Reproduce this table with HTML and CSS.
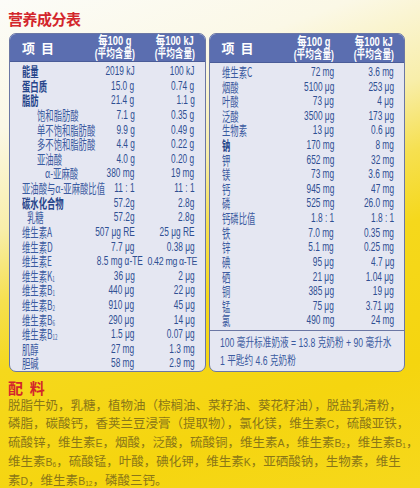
FILE: index.html
```html
<!DOCTYPE html>
<html lang="zh-CN">
<head>
<meta charset="utf-8">
<title>营养成分表</title>
<link rel="stylesheet" href="styles.css">
</head>
<body>
<main class="page">
  <h1 class="title">营养成分表</h1>
  <div class="panels">
    <section class="panel">
      <div class="head">
        <span class="h-item">项&nbsp;&nbsp;目</span>
        <span class="h-col"><span class="c">每100 g<br><small>(平均含量)</small></span></span>
        <span class="h-col"><span class="c">每100 kJ<br><small>(平均含量)</small></span></span>
      </div>
      <div class="rows">
        <div class="row"><span class="nm b"><span class="c">能量</span></span><span class="v"><span class="c">2019 kJ</span></span><span class="v"><span class="c">100 kJ</span></span></div>
        <div class="row"><span class="nm b"><span class="c">蛋白质</span></span><span class="v"><span class="c">15.0 g</span></span><span class="v"><span class="c">0.74 g</span></span></div>
        <div class="row"><span class="nm b"><span class="c">脂肪</span></span><span class="v"><span class="c">21.4 g</span></span><span class="v"><span class="c">1.1 g</span></span></div>
        <div class="row"><span class="nm i1"><span class="c">饱和脂肪酸</span></span><span class="v"><span class="c">7.1 g</span></span><span class="v"><span class="c">0.35 g</span></span></div>
        <div class="row"><span class="nm i1"><span class="c">单不饱和脂肪酸</span></span><span class="v"><span class="c">9.9 g</span></span><span class="v"><span class="c">0.49 g</span></span></div>
        <div class="row"><span class="nm i1"><span class="c">多不饱和脂肪酸</span></span><span class="v"><span class="c">4.4 g</span></span><span class="v"><span class="c">0.22 g</span></span></div>
        <div class="row"><span class="nm i1"><span class="c">亚油酸</span></span><span class="v"><span class="c">4.0 g</span></span><span class="v"><span class="c">0.20 g</span></span></div>
        <div class="row"><span class="nm i2"><span class="c">α-亚麻酸</span></span><span class="v"><span class="c">380 mg</span></span><span class="v"><span class="c">19 mg</span></span></div>
        <div class="row"><span class="nm"><span class="c">亚油酸与α-亚麻酸比值</span></span><span class="v"><span class="c">11 : 1</span></span><span class="v"><span class="c">11 : 1</span></span></div>
        <div class="row"><span class="nm b"><span class="c">碳水化合物</span></span><span class="v"><span class="c">57.2g</span></span><span class="v"><span class="c">2.8g</span></span></div>
        <div class="row"><span class="nm i0"><span class="c">乳糖</span></span><span class="v"><span class="c">57.2g</span></span><span class="v"><span class="c">2.8g</span></span></div>
        <div class="row"><span class="nm"><span class="c">维生素A</span></span><span class="v"><span class="c">507 μg RE</span></span><span class="v"><span class="c">25 μg RE</span></span></div>
        <div class="row"><span class="nm"><span class="c">维生素D</span></span><span class="v"><span class="c">7.7 μg</span></span><span class="v"><span class="c">0.38 μg</span></span></div>
        <div class="row"><span class="nm"><span class="c">维生素E</span></span><span class="v"><span class="c">8.5 mg α-TE</span></span><span class="v"><span class="c sm">0.42 mg α-TE</span></span></div>
        <div class="row"><span class="nm"><span class="c">维生素K<sub>1</sub></span></span><span class="v"><span class="c">36 μg</span></span><span class="v"><span class="c">2 μg</span></span></div>
        <div class="row"><span class="nm"><span class="c">维生素B<sub>1</sub></span></span><span class="v"><span class="c">440 μg</span></span><span class="v"><span class="c">22 μg</span></span></div>
        <div class="row"><span class="nm"><span class="c">维生素B<sub>2</sub></span></span><span class="v"><span class="c">910 μg</span></span><span class="v"><span class="c">45 μg</span></span></div>
        <div class="row"><span class="nm"><span class="c">维生素B<sub>6</sub></span></span><span class="v"><span class="c">290 μg</span></span><span class="v"><span class="c">14 μg</span></span></div>
        <div class="row"><span class="nm"><span class="c">维生素B<sub>12</sub></span></span><span class="v"><span class="c">1.5 μg</span></span><span class="v"><span class="c">0.07 μg</span></span></div>
        <div class="row"><span class="nm"><span class="c">肌醇</span></span><span class="v"><span class="c">27 mg</span></span><span class="v"><span class="c">1.3 mg</span></span></div>
        <div class="row"><span class="nm"><span class="c">胆碱</span></span><span class="v"><span class="c">58 mg</span></span><span class="v"><span class="c">2.9 mg</span></span></div>
      </div>
    </section>
    <section class="panel">
      <div class="head">
        <span class="h-item">项&nbsp;&nbsp;目</span>
        <span class="h-col"><span class="c">每100 g<br><small>(平均含量)</small></span></span>
        <span class="h-col"><span class="c">每100 kJ<br><small>(平均含量)</small></span></span>
      </div>
      <div class="rows">
        <div class="row"><span class="nm"><span class="c">维生素C</span></span><span class="v"><span class="c">72 mg</span></span><span class="v"><span class="c">3.6 mg</span></span></div>
        <div class="row"><span class="nm"><span class="c">烟酸</span></span><span class="v"><span class="c">5100 μg</span></span><span class="v"><span class="c">253 μg</span></span></div>
        <div class="row"><span class="nm"><span class="c">叶酸</span></span><span class="v"><span class="c">73 μg</span></span><span class="v"><span class="c">4 μg</span></span></div>
        <div class="row"><span class="nm"><span class="c">泛酸</span></span><span class="v"><span class="c">3500 μg</span></span><span class="v"><span class="c">173 μg</span></span></div>
        <div class="row"><span class="nm"><span class="c">生物素</span></span><span class="v"><span class="c">13 μg</span></span><span class="v"><span class="c">0.6 μg</span></span></div>
        <div class="row"><span class="nm b"><span class="c">钠</span></span><span class="v"><span class="c">170 mg</span></span><span class="v"><span class="c">8 mg</span></span></div>
        <div class="row"><span class="nm"><span class="c">钾</span></span><span class="v"><span class="c">652 mg</span></span><span class="v"><span class="c">32 mg</span></span></div>
        <div class="row"><span class="nm"><span class="c">镁</span></span><span class="v"><span class="c">73 mg</span></span><span class="v"><span class="c">3.6 mg</span></span></div>
        <div class="row"><span class="nm"><span class="c">钙</span></span><span class="v"><span class="c">945 mg</span></span><span class="v"><span class="c">47 mg</span></span></div>
        <div class="row"><span class="nm"><span class="c">磷</span></span><span class="v"><span class="c">525 mg</span></span><span class="v"><span class="c">26.0 mg</span></span></div>
        <div class="row"><span class="nm"><span class="c">钙磷比值</span></span><span class="v"><span class="c">1.8 : 1</span></span><span class="v"><span class="c">1.8 : 1</span></span></div>
        <div class="row"><span class="nm"><span class="c">铁</span></span><span class="v"><span class="c">7.0 mg</span></span><span class="v"><span class="c">0.35 mg</span></span></div>
        <div class="row"><span class="nm"><span class="c">锌</span></span><span class="v"><span class="c">5.1 mg</span></span><span class="v"><span class="c">0.25 mg</span></span></div>
        <div class="row"><span class="nm"><span class="c">碘</span></span><span class="v"><span class="c">95 μg</span></span><span class="v"><span class="c">4.7 μg</span></span></div>
        <div class="row"><span class="nm"><span class="c">硒</span></span><span class="v"><span class="c">21 μg</span></span><span class="v"><span class="c">1.04 μg</span></span></div>
        <div class="row"><span class="nm"><span class="c">铜</span></span><span class="v"><span class="c">385 μg</span></span><span class="v"><span class="c">19 μg</span></span></div>
        <div class="row"><span class="nm"><span class="c">锰</span></span><span class="v"><span class="c">75 μg</span></span><span class="v"><span class="c">3.71 μg</span></span></div>
        <div class="row"><span class="nm"><span class="c">氯</span></span><span class="v"><span class="c">490 mg</span></span><span class="v"><span class="c">24 mg</span></span></div>
      </div>
      <div class="foot">
        <p class="foot-line"><span class="fc">100 毫升标准奶液 = 13.8 克奶粉 + 90 毫升水</span></p>
        <p class="foot-line"><span class="fc">1 平匙约 4.6 克奶粉</span></p>
      </div>
    </section>
  </div>
  <section class="ingredients">
    <h2 class="ing-title">配&nbsp;&nbsp;料</h2>
    <p class="ing-text">脱脂牛奶，乳糖，植物油（棕榈油、菜籽油、葵花籽油），脱盐乳清粉，<br>磷脂，碳酸钙，香荚兰豆浸膏（提取物），氯化镁，维生素<span class="lt">C</span>，硫酸亚铁，<br>硫酸锌，维生素<span class="lt">E</span>，烟酸，泛酸，硫酸铜，维生素<span class="lt">A</span>，维生素<span class="lt">B<sub>2</sub></span>，维生素<span class="lt">B<sub>1</sub></span>，<br>维生素<span class="lt">B<sub>6</sub></span>，硫酸锰，叶酸，碘化钾，维生素<span class="lt">K</span>，亚硒酸钠，生物素，维生<br>素<span class="lt">D</span>，维生素<span class="lt">B<sub>12</sub></span>，磷酸三钙。</p>
  </section>
</main>
</body>
</html>
```
FILE: styles.css
```css
* { box-sizing: border-box; }
html, body { margin: 0; padding: 0; }
body {
  width: 420px;
  height: 488px;
  overflow: hidden;
  font-family: "Liberation Sans", "Noto Sans CJK SC", sans-serif;
  background: linear-gradient(160deg, #fcfcf8 0%, #fbf8e6 20%, #f8eeaa 36%, #f6e050 47%, #f5d81c 58%, #f5d50f 80%, #f6d81c 100%);
}
.page {
  padding: 9px 0 0 8px;
}
.title {
  margin: 0;
  font-family: "Noto Sans CJK SC", sans-serif;
  font-size: 15px;
  line-height: 20px;
  font-weight: 700;
  color: #d3262c;
  letter-spacing: -0.5px;
}
.panels {
  display: flex;
  gap: 3px;
  margin-top: 4px;
  margin-left: 1px;
  width: 396px;
  height: 339px;
}
.panel {
  flex: 1;
  display: flex;
  flex-direction: column;
  border: 1.5px solid #6b77a4;
  border-radius: 7px;
  background: #e5e7f2;
  overflow: hidden;
  color: #2f4f92;
}
.head {
  display: grid;
  grid-template-columns: minmax(0, 1fr) 64px 60px;
  align-items: center;
  height: 29px;
  padding: 0 10px 0 12px;
  background: #5b6eb0;
  color: #fff;
  font-weight: 700;
  border-bottom: 1px solid #4a5c98;
}
.h-item {
  font-family: "Noto Sans CJK SC", sans-serif;
  font-size: 13px;
  line-height: 16px;
}
.h-col {
  text-align: right;
  font-family: "Liberation Sans", "Noto Sans CJK SC", sans-serif;
  font-size: 13px;
  line-height: 13px;
  white-space: nowrap;
}
.h-col .c {
  text-align: center;
  transform: scaleX(0.72);
  transform-origin: 100% 50%;
}
.h-col small {
  font-size: 12px;
  font-weight: 700;
}
.rows {
  padding-top: 2px;
}
.row {
  display: grid;
  grid-template-columns: minmax(0, 1fr) 64px 60px;
  height: 14.62px;
  line-height: 14.62px;
  padding: 0 10px 0 12px;
  font-size: 13px;
  white-space: nowrap;
}
.nm {
  font-family: "Noto Sans CJK SC", sans-serif;
  color: #3a5aa0;
}
.nm.b { font-weight: 700; color: #25448a; }
.nm.i0 { padding-left: 5px; }
.nm.i1 { padding-left: 15px; }
.nm.i2 { padding-left: 23px; }
.v {
  text-align: right;
  color: #2f4f92;
}
.c {
  display: inline-block;
  transform: scaleX(0.64);
  transform-origin: 0 50%;
  white-space: nowrap;
}
.v .c { transform-origin: 100% 50%; }
.v .c.sm {
  font-size: 11px;
  letter-spacing: -0.4px;
  transform: scaleX(0.8);
}
sub {
  font-size: 7px;
  line-height: 0;
  vertical-align: -1px;
}
.foot {
  margin-top: auto;
  border-top: 1.5px solid #6b77a4;
  padding: 3px 0 2px 10px;
  height: 41px;
}
.foot-line {
  margin: 0;
  font-size: 12px;
  line-height: 18px;
  color: #3a5aa0;
  white-space: nowrap;
}
.fc {
  display: inline-block;
  transform: scaleX(0.72);
  transform-origin: 0 50%;
}
.ingredients {
  margin-top: 7px;
}
.ing-title {
  margin: 0;
  font-family: "Noto Sans CJK SC", sans-serif;
  font-size: 15px;
  line-height: 17px;
  font-weight: 700;
  color: #d3262c;
}
.ing-text {
  margin: 0;
  font-family: "Noto Sans CJK SC", sans-serif;
  font-size: 12.5px;
  line-height: 18.1px;
  color: #8a7618;
  white-space: nowrap;
}
.lt {
  font-family: "Liberation Sans", sans-serif;
  font-size: 10.5px;
}
.ing-text sub {
  font-size: 6.5px;
}
```
